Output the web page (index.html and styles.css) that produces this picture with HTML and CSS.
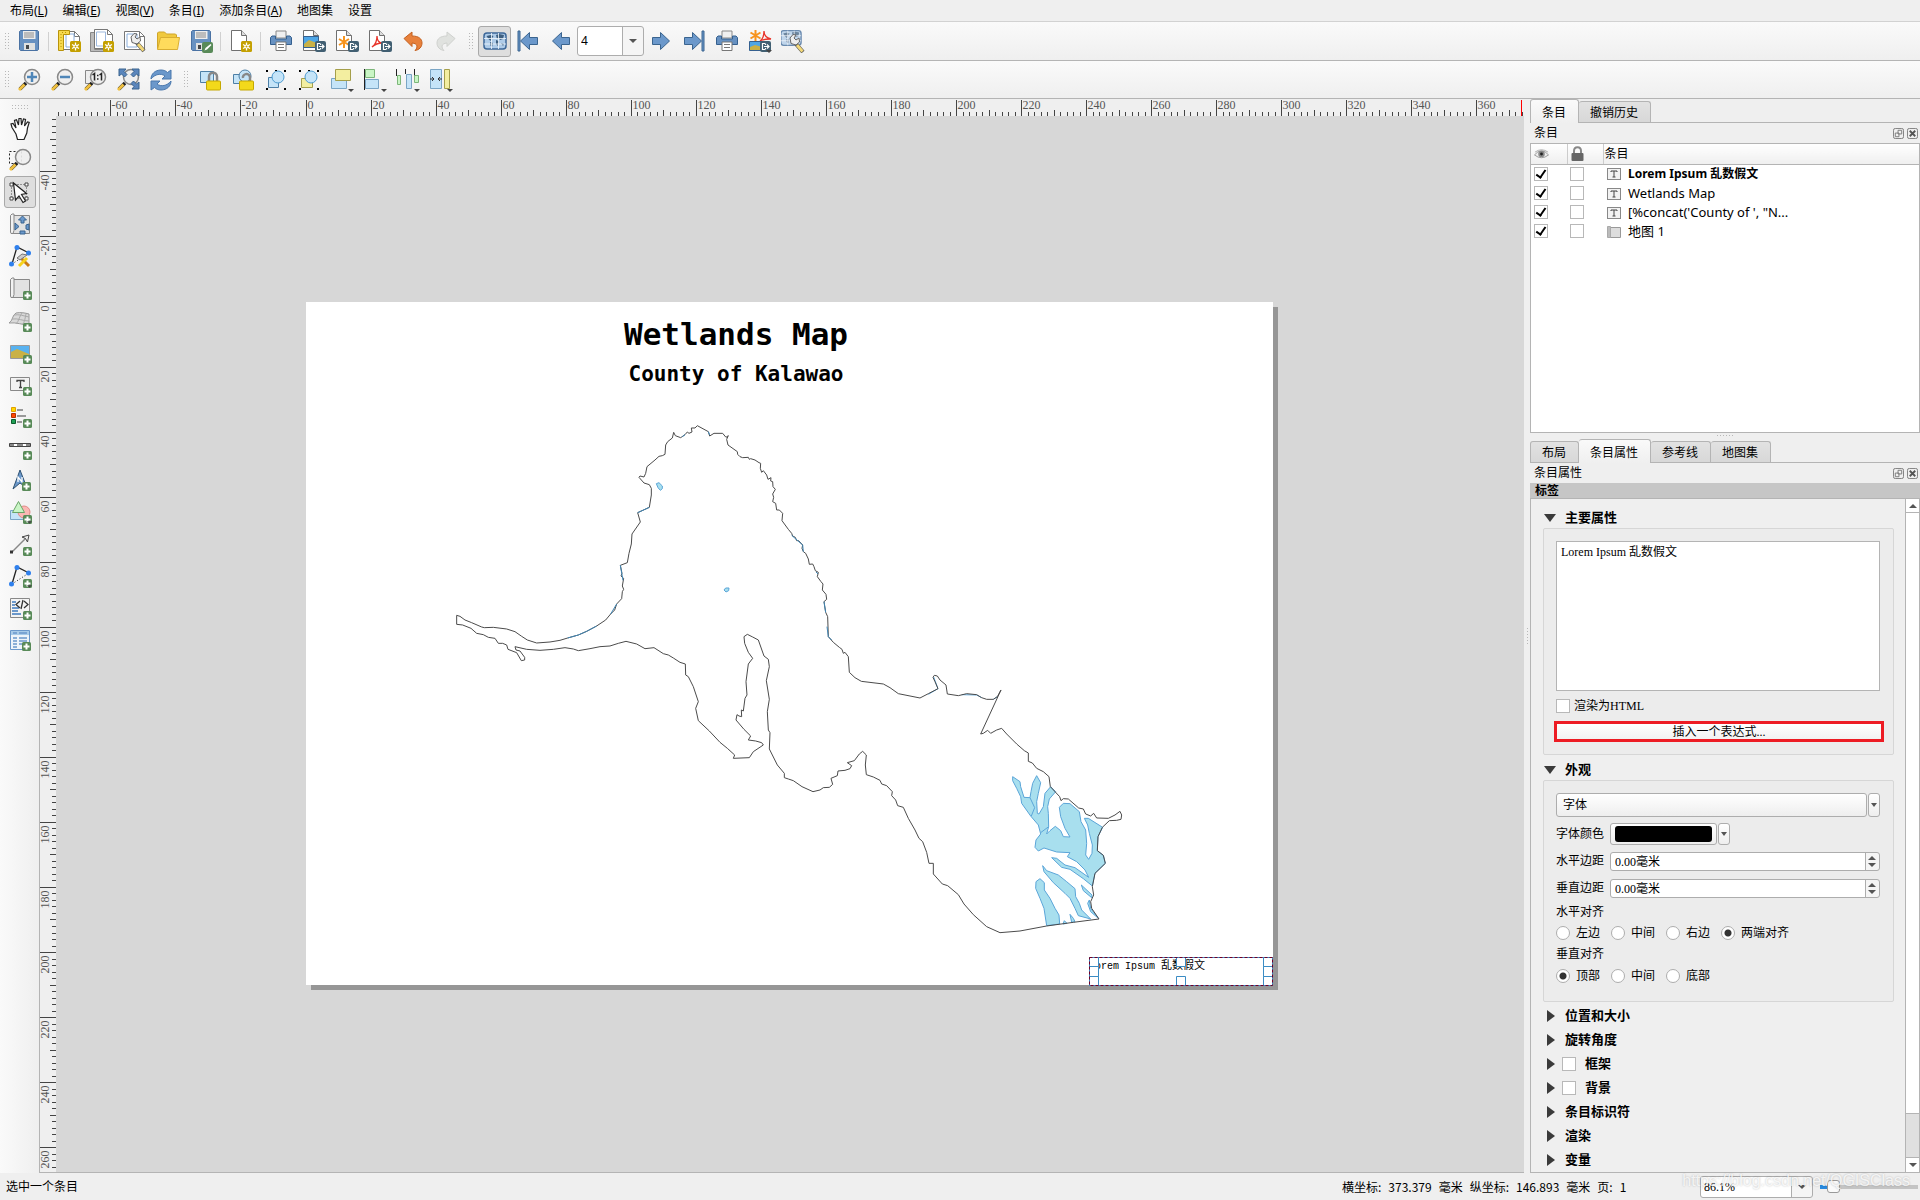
FILE: index.html
```html
<!DOCTYPE html>
<html lang="zh-CN">
<head>
    <meta charset="UTF-8">
    <meta name="viewport" content="width=device-width, initial-scale=1.0">
    <title>布局</title>
    <link rel="stylesheet" href="styles.css">
</head>
<body>
    <!-- shared icon parts -->
    <svg class="defs" width="0" height="0">
        <symbol id="plus" viewBox="0 0 9 9"><rect width="9" height="9" rx="1.5" fill="#588a58"/><path d="M4.5 1.5v6M1.5 4.5h6" stroke="#fff" stroke-width="2"/></symbol>
        <symbol id="star" viewBox="0 0 11 11"><rect width="11" height="11" rx="1.5" fill="#c4a000"/><path d="M5.5 1.5v8M2 3.5l7 4M2 7.5l7-4" stroke="#fff" stroke-width="1.3"/><circle cx="5.5" cy="5.5" r="2" fill="#fff"/><circle cx="5.5" cy="5.5" r="1" fill="#c4a000"/></symbol>
        <symbol id="export" viewBox="0 0 11 11"><rect width="11" height="11" rx="2" fill="#415f72"/><path d="M5 2.5H2.5v6H5M4 5.5h5M7 3.5l2 2-2 2M5.5 2.5v1.5M5.5 7v1.5" fill="none" stroke="#fff" stroke-width="1.2"/></symbol>
        <symbol id="floppy" viewBox="0 0 24 24"><path d="M3.5 1.5h17l1 1v18l-1 1h-17l-1-1v-18z" fill="#6791c1" stroke="#4a72a3"/><path d="M6 2h12.500v8H6z" fill="#eceded"/><path d="M7 4h10M7 6h10M7 8h10" stroke="#8c8c8c"/><path d="M7 14h11v7H7z" fill="#dfe1e1"/><path d="M9 16h3v4H9z" fill="#44474a"/></symbol>
        <symbol id="page" viewBox="0 0 24 24"><path d="M4.500 1.500h10l5 5v15h-15z" fill="#fff" stroke="#707070"/><path d="M14.500 1.500v5h5" fill="#ddd" stroke="#707070"/></symbol>
        <symbol id="printer" viewBox="0 0 24 24"><path d="M7 2h10v7H7z" fill="#f0f0f0" stroke="#888"/><path d="M3 7h3.500v3h11V7H21l1.500 1.500v7h-21v-7z" fill="#6791c1" stroke="#35608f"/><path d="M7 13h10v8.500H7z" fill="#fff" stroke="#777"/><path d="M9 15.500h6M9 18.500h6" stroke="#777"/></symbol>
        <symbol id="glass" viewBox="0 0 24 24"><path d="M3 21l6-6" stroke="#222" stroke-width="3.500"/><path d="M2 22l5.500-5.500" stroke="#f0c040" stroke-width="3"/><circle cx="15" cy="9" r="7.500" fill="#eee" fill-opacity=".9" stroke="#888" stroke-width="1.500"/></symbol>
        <symbol id="arrow" viewBox="0 0 24 24"><path d="M20.500 8.500v7h-8v5L3.500 12l9-8.500v5z" fill="#6b98cb" stroke="#3a648f"/></symbol>
        <symbol id="world" viewBox="0 0 24 24"><rect x="1" y="4" width="22" height="16" rx="3" fill="#aecbe8" stroke="#3c6798" stroke-width="1.500"/><path d="M3.500 7l4-1 3 1-2 3-1 2-2-2zM7 13l3 1-1 4-2-2zM13 6l3-1 5 1-1 4-3 1-1-2-2 1zM13 11l3 1-1 5-2-2zM18 14l3 1-1 2z" fill="#3e5f80"/><path d="M1 9.500h22M1 15h22M8.500 4v16M15.500 4v16" stroke="#f2f7fc" stroke-width=".8"/></symbol>
        <symbol id="wrench" viewBox="0 0 24 24"><path d="M14 14l7 8" stroke="#555" stroke-width="4"/><path d="M15 15l5.500 6.500" stroke="#f3d878" stroke-width="2.800"/><path d="M8 8l3-3.500 3 .5-2 3 2 2 3-2 .5 4-3.500 3-5-1.500z" fill="#eee" stroke="#666"/></symbol>
        <symbol id="mapsheet" viewBox="0 0 24 24"><path d="M5.500 3.500h16v18h-18" fill="#e2e2e2" stroke="#888"/><path d="M2.500 20V3.500l1.500-1.500h2v16.500l-1 3H3z" fill="#f2f2f2" stroke="#888"/></symbol>
        <symbol id="nodes" viewBox="0 0 24 24"><path d="M4 20L9 3l12 6" fill="none" stroke="#222" stroke-width="1.300"/><path d="M4 20L21 9" stroke="#222" stroke-dasharray="1 2"/><g fill="#2f80ed"><circle cx="9" cy="3.500" r="2.500"/><circle cx="20.500" cy="9" r="2.500"/><circle cx="3.500" cy="20" r="2.500"/></g></symbol>
        <symbol id="corners" viewBox="0 0 24 24"><path d="M2 2h2v2H2zM20 2h2v2h-2zM2 20h2v2H2zM20 20h2v2h-2zM11 2h2v1h-2z" fill="#000"/></symbol>
        <symbol id="dd" viewBox="0 0 6 3"><path d="M0 0h6L3 3z" fill="#444"/></symbol>
        <symbol id="float" viewBox="0 0 12 12"><rect x=".5" y=".5" width="11" height="11" rx="2" fill="none" stroke="#777"/><path d="M5.500 2.500h4v4h-4zM2.500 5.500h4v4h-4z" fill="#efefef" stroke="#777"/></symbol>
        <symbol id="close" viewBox="0 0 12 12"><rect x=".5" y=".5" width="11" height="11" rx="2" fill="none" stroke="#777"/><path d="M3 3l6 6M9 3L3 9" stroke="#555" stroke-width="2"/></symbol>
        <symbol id="labelicon" viewBox="0 0 14 12"><rect x=".5" y=".5" width="13" height="11" fill="#f2f2f2" stroke="#888"/><path d="M4 4V3h6v1M7 3v6M5.500 9h3" fill="none" stroke="#444"/></symbol>
    </svg>

    <nav class="menubar">
        <button>布局(<u>L</u>)</button>
        <button>编辑(<u>E</u>)</button>
        <button>视图(<u>V</u>)</button>
        <button>条目(<u>I</u>)</button>
        <button>添加条目(<u>A</u>)</button>
        <button>地图集</button>
        <button>设置</button>
    </nav>

    <div class="toolbar">
        <span class="grip first"></span>
        <button class="tool" title="保存"><svg><use href="#floppy"/></svg></button>
        <span class="sep"></span>
        <button class="tool" title="新建布局"><svg viewBox="0 0 24 24"><path d="M6.500 2.500h11l5 5v13h-16z" fill="#fff" stroke="#777"/><path d="M17.500 2.500v5h5" fill="none" stroke="#777"/><path d="M9 5h8v13H9z" fill="none" stroke="#8aaedb"/><path d="M1.500 1.500h11v4h-6v16h-5z" fill="#f7d94c" stroke="#b8930b"/><path d="M4 5v15M5 3.500h6" stroke="#b8930b" stroke-dasharray="1 2"/><use href="#star" x="13" y="12" width="11" height="11"/></svg></button>
        <button class="tool" title="复制布局"><svg viewBox="0 0 24 24"><path d="M.5 3.500h4v17h15v2H.5z" fill="#bbb" stroke="#888"/><path d="M4.500.5h13l5 5v14h-18z" fill="#fff" stroke="#777"/><path d="M17.500.5v5h5" fill="none" stroke="#777"/><path d="M6.500 3h9v14h-9z" fill="none" stroke="#9db9df"/><use href="#star" x="13" y="12" width="11" height="11"/></svg></button>
        <button class="tool" title="布局管理器"><svg viewBox="0 0 24 24"><path d="M1.500 2.500h15l5 5v13h-20z" fill="#fff" stroke="#777"/><path d="M16.500 2.500v5h5" fill="none" stroke="#777"/><path d="M4 5h10v13H4z" fill="none" stroke="#8aaedb"/><use href="#wrench"/></svg></button>
        <button class="tool" title="打开"><svg viewBox="0 0 24 24"><path d="M1.500 20V4l1-1h6l2 2h9l1 1v3" fill="#f0c93e" stroke="#cfa52b"/><path d="M1.500 20.500l3-12h19l-2 12z" fill="#ffdb5c" stroke="#d9ae32"/></svg></button>
        <button class="tool" title="另存为"><svg viewBox="0 0 24 24"><use href="#floppy"/><rect x="13" y="13" width="11" height="11" rx="2" fill="#588a58"/><path d="M15.500 21.500l1-2.500 5-4 1 1-4.500 4.500z" fill="#fff"/></svg></button>
        <span class="sep"></span>
        <button class="tool" title="添加页面"><svg viewBox="0 0 24 24"><use href="#page" x="-2"/><use href="#star" x="12" y="12" width="11" height="11"/></svg></button>
        <span class="sep"></span>
        <button class="tool" title="打印"><svg><use href="#printer"/></svg></button>
        <button class="tool" title="导出图像"><svg viewBox="0 0 24 24"><use href="#page" x="-3"/><path d="M1.500 7.500h15v11h-15z" fill="#4ea6e6" stroke="#35608f"/><path d="M2 15l5-4 5 2 4 1v4H2z" fill="#c9b146"/><use href="#export" x="13" y="12" width="11" height="11"/></svg></button>
        <button class="tool" title="导出 SVG"><svg viewBox="0 0 24 24"><use href="#page" x="-3"/><path d="M9 7v12M4 10l10 6M4 16l10-6" stroke="#f7941d" stroke-width="2"/><use href="#export" x="13" y="12" width="11" height="11"/></svg></button>
        <button class="tool" title="导出 PDF"><svg viewBox="0 0 24 24"><use href="#page" x="-3"/><path d="M4 18c3-2 5-6 5-11 0 5 3 7 6 7-4 0-8 1-11 4z" fill="none" stroke="#e8352b" stroke-width="1.300"/><use href="#export" x="13" y="12" width="11" height="11"/></svg></button>
        <button class="tool" title="撤销"><svg viewBox="0 0 24 24"><path d="M3 9.500L11 3v4c7 0 10 3 10 7s-3 7-7 7.500c3-3 3-7-3-7.500v3.500z" fill="#e8813c" stroke="#c4601f"/></svg></button>
        <button class="tool" title="重做"><svg viewBox="0 0 24 24"><path d="M21 9.500L13 3v4C6 7 3 10 3 14s3 7 7 7.500c-3-3-3-7 3-7.500v3.500z" fill="#e0e2df" stroke="#cfd1ce"/></svg></button>
        <span class="grip"></span>
        <button class="tool pressed" title="预览地图集"><svg><use href="#world"/></svg></button>
        <button class="tool" title="首个要素"><svg viewBox="0 0 24 24"><path d="M2 2h2v20H2z" fill="#6b98cb" stroke="#3a648f"/><use href="#arrow" x="1"/></svg></button>
        <button class="tool" title="上一要素"><svg><use href="#arrow"/></svg></button>
        <span class="combo page-combo"><select aria-label="页面"><option>4</option></select></span>
        <button class="tool" title="下一要素"><svg class="flip"><use href="#arrow"/></svg></button>
        <button class="tool" title="末个要素"><svg class="flip" viewBox="0 0 24 24"><path d="M2 2h2v20H2z" fill="#6b98cb" stroke="#3a648f"/><use href="#arrow" x="1"/></svg></button>
        <button class="tool" title="打印地图集"><svg><use href="#printer"/></svg></button>
        <button class="tool" title="导出地图集"><svg viewBox="0 0 24 24"><path d="M7.500 1v11M2.500 3.500l10 6M2.500 9.500l10-6" stroke="#f7941d" stroke-width="2"/><path d="M12 12c3-2 4-5 4-10 0 5 3 7 7 8-5 0-8 0-11 2z" fill="none" stroke="#e8352b" stroke-width="1.300"/><path d="M1.500 12.500h13v9h-13z" fill="#4ea6e6" stroke="#35608f"/><path d="M2 18l5-2 7 2v3H2z" fill="#c9b146"/><use href="#export" x="12" y="12" width="11" height="11"/><use href="#dd" x="18" y="21" width="6" height="3"/></svg></button>
        <button class="tool" title="地图集设置"><svg viewBox="0 0 24 24"><use href="#world" x="-1" y="-2" width="22" height="22" opacity=".75"/><use href="#wrench" x="1" y="1"/></svg></button>
    </div>

    <div class="toolbar second">
        <span class="grip first"></span>
        <button class="tool" title="放大"><svg viewBox="0 0 24 24"><use href="#glass"/><path d="M15 4v10M10 9h10" stroke="#4f86b8" stroke-width="2.500"/></svg></button>
        <button class="tool" title="缩小"><svg viewBox="0 0 24 24"><use href="#glass"/><path d="M10 9h10" stroke="#4f86b8" stroke-width="2.500"/></svg></button>
        <button class="tool" title="缩放至 100%"><svg viewBox="0 0 24 24"><path d="M2.500 2.500h10v13h-10z" fill="#eee" stroke="#888"/><use href="#glass"/><path d="M9.500 7l2-1.500v7M16.500 7l2-1.500v7" fill="none" stroke="#222" stroke-width="1.500"/><path d="M14 7.500h1.500M14 11h1.500" stroke="#222" stroke-width="1.500"/></svg></button>
        <button class="tool" title="全图缩放"><svg viewBox="0 0 24 24"><use href="#glass"/><path d="M3 1h7L8 3.500l3 3L8.500 9l-3-3L3 8zM23 1h-7l2 2.500-3 3L17.500 9l3-3L23 8zM23 21h-7l2-2.500-3-3 2.500-2.500 3 3 2.500-2z" fill="#5b86bc" stroke="#3a648f"/></svg></button>
        <button class="tool" title="刷新"><svg viewBox="0 0 24 24"><path d="M2 11c0-5 4-9 10-9 3 0 5 1 6.500 2.500L22 2v9h-9l3-3c-4-3-10-2-14 3z" fill="#6b98cb" stroke="#4a78ad"/><path d="M22 13c0 5-4 9-10 9-3 0-5-1-6.500-2.500L2 22v-9h9l-3 3c4 3 10 2 14-3z" fill="#6b98cb" stroke="#4a78ad"/></svg></button>
        <span class="grip"></span>
        <button class="tool" title="锁定所选条目"><svg viewBox="0 0 24 24"><path d="M2.500 3.500h13v11h-13z" fill="#c5e4f8" stroke="#4d7fa6"/><path d="M11 14V8.500c0-5 8-5 8 0V14" fill="none" stroke="#888" stroke-width="2.500"/><rect x="8.500" y="13" width="14" height="9" rx="1" fill="#f3d91b" stroke="#c5a800"/></svg></button>
        <button class="tool" title="解锁全部"><svg viewBox="0 0 24 24"><path d="M2.500 6.500h10v9h-10z" fill="#c5e4f8" stroke="#4d7fa6"/><circle cx="14" cy="8" r="6" fill="#c5e4f8" stroke="#4d7fa6"/><path d="M19 13V9c-1-5-8-3-7 1" fill="none" stroke="#888" stroke-width="2.500"/><rect x="8.500" y="13" width="14" height="9" rx="1" fill="#f3d91b" stroke="#c5a800"/></svg></button>
        <button class="tool" title="组合"><svg viewBox="0 0 24 24"><path d="M4.500 9.500h10v10h-10z" fill="#c5e4f8" stroke="#4d7fa6"/><circle cx="14" cy="9" r="6" fill="#c5e4f8" stroke="#4d9bd0"/><use href="#corners"/></svg></button>
        <button class="tool" title="取消组合"><svg viewBox="0 0 24 24"><path d="M4.500 10.500h11v9h-11z" fill="#f3eea0" stroke="#a59f4a"/><circle cx="14" cy="9" r="6" fill="#c5e4f8" stroke="#4d9bd0"/><use href="#corners"/></svg></button>
        <button class="tool" title="提升"><svg viewBox="0 0 24 24"><path d="M1.500 10.500h15v10h-15z" fill="#c5e4f8" stroke="#7aa5c5"/><path d="M5.500 1.500h15v11h-15z" fill="#f3eea0" stroke="#a59f4a"/><use href="#dd" x="18" y="21" width="6" height="3"/></svg></button>
        <button class="tool" title="对齐"><svg viewBox="0 0 24 24"><path d="M1.500 1v21" stroke="#222"/><path d="M2.500 1.500h9v8h-9z" fill="#c9f5c5" stroke="#7db67a"/><path d="M2.500 11.500h13v9h-13z" fill="#c5e4f8" stroke="#7aa5c5"/><use href="#dd" x="18" y="21" width="6" height="3"/></svg></button>
        <button class="tool" title="分布"><svg viewBox="0 0 24 24"><path d="M.5 1v7M9.500 1v5M18.500 1v7" stroke="#222"/><path d="M1.500 7.500h3v9h-3zM18.500 7.500h4v7h-4z" fill="#c9f5c5" stroke="#7db67a"/><path d="M10.500 6.500h5v14h-5z" fill="#c5e4f8" stroke="#7aa5c5"/><use href="#dd" x="18" y="21" width="6" height="3"/></svg></button>
        <button class="tool" title="调整大小"><svg viewBox="0 0 24 24"><path d="M1.500 1.500h11v19h-11z" fill="#c5e4f8" stroke="#7aa5c5"/><path d="M1 11h4M3 9l2 2-2 2M13 11H9M11 9l-2 2 2 2" fill="none" stroke="#333"/><path d="M15.500 1.500h5v19h-5z" fill="#f3eea0" stroke="#a59f4a"/><use href="#dd" x="18" y="21" width="6" height="3"/></svg></button>
    </div>

    <main class="work">
        <div class="toolbox">
            <span class="grip-h"></span>
            <button class="tool" title="平移"><svg viewBox="0 0 24 24"><path d="M8 18L4 11.500 3 8l2-.5L8 12 6.500 4.500l2-.7L10.500 9 11 2.500h2L13.500 9l2-6 2 .5L16.500 10l3-4 1.700.5-1.700 5.500-.7 5L16 23.500H9.500z" fill="#fff" stroke="#222" stroke-width="1.200"/></svg></button>
            <button class="tool" title="缩放"><svg viewBox="0 0 24 24"><path d="M1.500 3.500h12v12h-12z" fill="none" stroke="#222" stroke-dasharray="2 2"/><use href="#glass"/></svg></button>
            <button class="tool pressed" title="选择/移动条目"><svg viewBox="0 0 24 24"><path d="M3.500 4.500h15v14h-15z" fill="none" stroke="#444" stroke-dasharray="1 2"/><path d="M2 3h3v3H2zM17 3h3v3h-3zM2 17h3v3H2zM17 17h3v3h-3z" fill="#fff" stroke="#444"/><path d="M5.500 3l2 17 3.500-4 4 6.500 2.500-1.500-4-6.500 5-1z" fill="#fff" stroke="#222" stroke-width="1.200"/></svg></button>
            <button class="tool" title="移动条目内容"><svg viewBox="0 0 24 24"><use href="#mapsheet"/><path d="M14.500 4l4 4H16v3h-3V8h-2.500zM7 11l4 3.500L7 18zM21 12l-3 1v4l3 1zM12 19h5v3h-5z" fill="#6b98cb" stroke="#3a648f"/></svg></button>
            <button class="tool" title="编辑节点"><svg viewBox="0 0 24 24"><use href="#nodes"/><path d="M13 14l8 8" stroke="#c97a12" stroke-width="3"/><path d="M11 22l8-8" stroke="#f7d21b" stroke-width="3"/><path d="M9 14l5-4 5 1-7 5z" fill="#ccc" stroke="#777"/></svg></button>
            <button class="tool" title="添加地图"><svg viewBox="0 0 24 24"><use href="#mapsheet"/><use href="#plus" x="15" y="15" width="9" height="9"/></svg></button>
            <button class="tool" title="添加 3D 地图"><svg viewBox="0 0 24 24"><path d="M1 15c4-2 3-8 7-10 5-1 9 0 13 1v11c-6 0-13-3-20-2z" fill="#d9d9d9" stroke="#999"/><path d="M4 11c6-1 11 2 17 2M6 7c5-1 10 1 15 2M8 16c3-3 3-7 6-11M14 17c3-3 3-7 4-11" fill="none" stroke="#aaa"/><use href="#plus" x="15" y="15" width="9" height="9"/></svg></button>
            <button class="tool" title="添加图片"><svg viewBox="0 0 24 24"><path d="M2.500 5.500h19v13h-19z" fill="#58b2f0" stroke="#999"/><path d="M3 12l6-3 12 5v4H3z" fill="#c9b146"/><use href="#plus" x="15" y="15" width="9" height="9"/></svg></button>
            <button class="tool" title="添加标签"><svg viewBox="0 0 24 24"><path d="M2.500 5.500h19v13h-19z" fill="#f3f3f3" stroke="#888"/><path d="M9 10V8.500h7V10M12.500 8.500v7M11 15.500h3" fill="none" stroke="#444" stroke-width="1.300"/><use href="#plus" x="15" y="15" width="9" height="9"/></svg></button>
            <button class="tool" title="添加图例"><svg viewBox="0 0 24 24"><path d="M3.500 3.500h4v4h-4z" fill="#ffd800" stroke="#e0a000"/><path d="M3.500 9.500h4v4h-4z" fill="#ff4a00" stroke="#b33000"/><path d="M3.500 15.500h4v4h-4z" fill="#1fa055" stroke="#0c5c2c"/><path d="M9 6h6M9 12h9M9 18h5" stroke="#999" stroke-width="2"/><use href="#plus" x="15" y="15" width="9" height="9"/></svg></button>
            <button class="tool" title="添加比例尺"><svg viewBox="0 0 24 24"><path d="M1.500 7.500h21v3h-21z" fill="#888" stroke="#444"/><path d="M6 9h3M15 9h3" stroke="#fff" stroke-width="2"/><use href="#plus" x="15" y="15" width="9" height="9"/></svg></button>
            <button class="tool" title="添加指北针"><svg viewBox="0 0 24 24"><path d="M12 2l7 18-7-5-7 6z" fill="#6b98cb" stroke="#2f5273"/><path d="M10 14V9l4 5V9" fill="none" stroke="#fff" stroke-width="1.300"/><use href="#plus" x="14" y="14" width="9" height="9"/></svg></button>
            <button class="tool" title="添加形状"><svg viewBox="0 0 24 24"><path d="M2.500 10.500h14v9h-14z" fill="#c5e4f8" stroke="#7aa5c5"/><circle cx="16" cy="12" r="6" fill="#fbb7b4" stroke="#e08a86"/><path d="M10.500 1.500l6 11h-12z" fill="#c9f5c5" stroke="#6aa567"/><use href="#plus" x="15" y="15" width="9" height="9"/><use href="#dd" x="19" y="21" width="5" height="3"/></svg></button>
            <button class="tool" title="添加箭头"><svg viewBox="0 0 24 24"><path d="M4 20L18 6" stroke="#888" stroke-width="1.500"/><path d="M21 3l-1.500 7-2-3.500L14 5z" fill="#eee" stroke="#444"/><path d="M2 18.500h3v3H2z" fill="#333"/><use href="#plus" x="15" y="15" width="9" height="9"/></svg></button>
            <button class="tool" title="添加节点条目"><svg viewBox="0 0 24 24"><use href="#nodes"/><use href="#plus" x="15" y="15" width="9" height="9"/><use href="#dd" x="19" y="21" width="5" height="3"/></svg></button>
            <button class="tool" title="添加 HTML"><svg viewBox="0 0 24 24"><path d="M2.500 2.500h19v19h-19z" fill="#f4f4f4" stroke="#888"/><path d="M4 6h4M4 9h3M4 12h7M4 15h6M4 18h9" stroke="#6b98cb" stroke-width="2"/><path d="M12 5L8 8.500l4 3.500M16 5l4 3.500-4 3.500M15 4l-2 9" fill="none" stroke="#333" stroke-width="1.300"/><use href="#plus" x="15" y="15" width="9" height="9"/></svg></button>
            <button class="tool" title="添加属性表"><svg viewBox="0 0 24 24"><path d="M2.500 2.500h19v19h-19z" fill="#eef4fa" stroke="#6b98cb"/><path d="M3 3h18v4H3z" fill="#a8cbe9"/><path d="M5 5h4M11 5h8M5 10h4M11 10h8M5 13h4M11 13h8M5 16h4M11 16h4M5 19h4" stroke="#6b98cb" stroke-width="1.300"/><use href="#plus" x="14" y="14" width="9" height="9"/></svg></button>
        </div>

        <div class="view">
            <div class="corner"></div>
            <svg class="ruler" id="rulerX"></svg>
            <svg class="ruler" id="rulerY"></svg>
            <div class="canvas">
                <div class="paper">
                    <svg class="map" viewBox="306 302 967 683">
                        <g transform="translate(440 410) scale(.33333)" fill="none" stroke="#4a4a4a" stroke-width="3" stroke-linejoin="round">
                            <path fill="#a8dfee" stroke="#5aa5d8" d="M649 221l8-3 10 10v8l-6 5-7-8zM852 540l5-6h10l-1 8-8 4z"/>
                            <path d="M50 643V616L60 619 75 630 95 638 125 651 133 653 160 652 200 657 225 665 245 679 262 690 290 699 330 696 360 691 383 684 415 675 440 664 470 648 497 630 512 612 524 600 530 582 545 566 547 545 551 538 547 528 551 505 543 498 546 490 541 466 562 458 567 430 574 402 576 372 601 336 593 308 628 292 634 255 634 235 628 224 612 219 597 202 600 198 612 201 617 190 621 170 645 150 657 139 667 137 675 133 677 105 683 95 697 84 701 67 706 77 722 83 735 74 742 66 747 70 756 66 754 54 765 54 772 47 805 65 809 78 822 70 848 70 858 82 865 77 860 88 864 105 892 125 893 133 900 140 908 143 925 142 928 148 932 146 945 150 957 158 962 160 961 175 965 187 970 182 980 195 984 208 993 203 992 213 998 215 999 230 1006 238 998 252 1001 262 998 275 1007 280 1010 300 1018 300 1028 310 1026 332 1045 358 1055 370 1058 378 1066 382 1070 392 1076 392 1088 405 1086 415 1090 425 1097 430 1105 447 1108 463 1118 462 1122 470 1126 482 1135 487 1132 500 1143 515 1149 522 1147 540 1158 553 1160 568 1152 575 1157 607 1163 620 1165 680 1180 697 1198 712 1206 718 1210 730 1215 727 1225 740"/>
                            <path d="M1140 1140L1119 1145 1086 1130 1060 1112 1045 1107 1033 1103 1033 1090 1012 1065 988 1017 990 968 985 960 982 905 988 868 979 812 988 770 985 748 972 738 955 690 938 681 922 673 912 680 914 700 925 727 938 745 925 762 918 815 921 855 915 865 910 903 904 900 905 920 897 918 891 914 888 930 912 958 932 978 925 990 947 993 965 998 970 1005 940 1025 928 1043 880 1045 884 1035 862 1015 840 997 808 963 775 932 767 895 775 875 760 830 745 800 737 795 736 762 720 757 700 744 685 735 670 731 642 713 615 716 590 702 558 694 535 700 510 708 480 710 450 716 415 722 400 717 375 713 340 718 300 721 260 718 225 710 228 720 240 723 254 742 254 750 244 752 230 728 204 718 200 705 188 700 175 700 165 685 145 682 130 674 110 670 93 655 68 645 50 643"/>
                            <path stroke="#3f86b5" d="M383 684L415 675 440 664 470 648M593 308l35-16M541 466l8 45M530 582l-18 30M805 65l4 10M735 74l-8 6M1055 376l33 29 2 20M1128 486l6 6M1152 575l5 32M1161 650l4 30 10 10"/>
                        </g>
                        <g transform="translate(820 600) scale(.33333)" fill="none" stroke-width="3" stroke-linejoin="round">
                            <g fill="#a8dfee" stroke="#5aa5d8">
                                <path d="M578 530L600 545 602 560 612 592 630 593 633 575 638 550 650 527 662 548 655 580 650 605 652 640 657 642 670 620 675 580 692 560 707 575 688 597 683 620 685 640 686 680 680 702 690 692 706 679 722 692 730 710 750 711 735 685 722 650 718 622 730 610 750 611 778 635 783 665 797 690 800 730 797 765 806 778 816 760 817 735 808 700 803 675 793 655 805 655 848 682 834 710 832 752 850 766 856 790 825 820 817 858 790 836 750 808 725 802 695 773 710 775 735 795 765 803 806 832 795 810 770 785 742 770 750 758 710 756 672 744 655 753 645 742 648 720 662 702 655 675 632 648 605 610 602 590 590 565 578 542Z"/>
                                <path d="M668 797L680 812 715 825 740 845 765 866 767 890 778 910 785 930 812 957 775 947 765 925 750 895 735 880 700 848 672 815ZM660 836L673 848 673 870 690 895 705 925 717 945 719 972 680 977 672 925 660 895 647 865 648 845ZM784 855L816 885 815 893 790 872ZM808 900L812 925 835 955 812 935 803 910ZM750 943L760 955 765 965 755 967ZM733 962l8 8-12 2Z"/>
                                <path fill="none" d="M630 593l14 30-10 25M662 698l24-18M325 283l29-17-13-35M425 284l45 1 15 8M520 298l12-8"/>
                            </g>
                            <path stroke="#4a4a4a" d="M85 170L88 217 105 233 124 244 190 252 210 263 235 281 270 288 300 294 325 281 354 266 345 245 339 232 343 226 352 228 360 240 378 255 382 282 415 287 440 281 470 284 485 293 500 298 520 298 532 290 543 270 482 402 490 400 503 391 512 400 530 390 545 385 560 402 590 432 613 452 625 459 625 484 637 489 650 505 670 515 687 530 691 560 719 590 723 602 730 596 745 597 776 624 790 627 797 642 812 648 821 640 830 654 865 655 885 645 900 634 905 645 903 658 890 661 868 662 847 682 834 710 832 752 850 766 856 790 825 820 817 860 821 885 812 905 815 925 837 957 760 967 680 978 600 993 540 998 500 980 460 944 432 912 415 884 383 857 367 852 340 822 340 790 327 790 320 757 308 725 297 715 285 690 265 655 250 622 233 617 227 600 215 587 217 575 200 557 185 552 180 541 160 531 139 524 136 495 139 465 128 454 118 462 103 482 82 488 95 497 90 506 75 511 54 513 52 527 33 535 38 553 28 562 10 563 0 570"/>
                        </g>
                    </svg>
                    <p class="map-title">Wetlands Map</p>
                    <p class="map-subtitle">County of Kalawao</p>
                    <div class="label-item">
                        <span class="latin">Lorem Ipsum </span>乱数假文
                        <svg class="handles" viewBox="0 0 184 29">
                            <path d="M.5.5h9v9h-9zM.5 9.500h9v10h-9zM.5 19.500h9v9h-9zM87.500.5h9v9h-9zM87.500 19.500h9v9h-9zM174.500.5h9v9h-9zM174.500 9.500h9v10h-9zM174.500 19.500h9v9h-9z" fill="#fff" stroke="#3b8cc4"/>
                            <path d="M.5.5h183v28H.5z" fill="none" stroke="#3b8cc4"/>
                            <path d="M.5.5h183v28H.5z" fill="none" stroke="#700028" stroke-dasharray="3 2"/>
                        </svg>
                    </div>
                </div>
            </div>
        </div>

        <div class="splitter"></div>

        <aside class="dock">
            <div class="tabs">
                <button class="tab active">条目</button>
                <button class="tab">撤销历史</button>
            </div>
            <div class="dock-title"><span>条目</span><button title="浮动"><svg><use href="#float"/></svg></button><button title="关闭"><svg><use href="#close"/></svg></button></div>
            <div class="tree">
                <table>
                    <thead>
                        <tr>
                            <th class="narrow"><svg class="eye" viewBox="0 0 16 12"><path d="M.5 7Q8-2 15.500 7 8 13 .5 7z" fill="#eee" stroke="#999"/><circle cx="8" cy="6" r="3.500" fill="#888"/><circle cx="8" cy="6" r="1.500" fill="#222"/><path d="M1 4q7-5 14 0" fill="none" stroke="#aaa"/></svg></th>
                            <th class="narrow"><svg class="lock" viewBox="0 0 13 15"><path d="M3 8V5c0-5 7-5 7 0v3" fill="none" stroke="#888" stroke-width="2"/><rect x=".5" y="7" width="12" height="8" rx="1" fill="#666"/></svg></th>
                            <th>条目</th>
                        </tr>
                    </thead>
                    <tbody>
                        <tr class="current"><td><input type="checkbox" aria-label="可见" checked></td><td><input type="checkbox" aria-label="锁定"></td><td><svg class="kind"><use href="#labelicon"/></svg>Lorem Ipsum 乱数假文</td></tr>
                        <tr><td><input type="checkbox" aria-label="可见" checked></td><td><input type="checkbox" aria-label="锁定"></td><td><svg class="kind"><use href="#labelicon"/></svg>Wetlands Map</td></tr>
                        <tr><td><input type="checkbox" aria-label="可见" checked></td><td><input type="checkbox" aria-label="锁定"></td><td><svg class="kind"><use href="#labelicon"/></svg>[%concat('County of ', "N...</td></tr>
                        <tr><td><input type="checkbox" aria-label="可见" checked></td><td><input type="checkbox" aria-label="锁定"></td><td><svg class="kind" viewBox="0 0 14 12"><path d="M1.500 1.500h12v10h-12z" fill="#ddd" stroke="#999"/><path d="M.5.5h3v11h-3z" fill="#bbb" stroke="#aaa"/></svg>地图 1</td></tr>
                    </tbody>
                </table>
            </div>
            <div class="dots"></div>
            <div class="tabs">
                <button class="tab">布局</button>
                <button class="tab active">条目属性</button>
                <button class="tab">参考线</button>
                <button class="tab">地图集</button>
            </div>
            <div class="dock-title"><span>条目属性</span><button title="浮动"><svg><use href="#float"/></svg></button><button title="关闭"><svg><use href="#close"/></svg></button></div>
            <div class="kind-bar">标签</div>
            <div class="props">
                <div class="props-body">
                    <div class="head"><button class="open">主要属性</button></div>
                    <section class="group main-props">
                        <textarea aria-label="标签文本">Lorem Ipsum 乱数假文</textarea>
                        <label class="check"><input type="checkbox">渲染为HTML</label>
                        <button class="insert">插入一个表达式...</button>
                    </section>
                    <div class="head"><button class="open">外观</button></div>
                    <section class="group look">
                        <div class="split font"><button class="face">字体</button><button class="drop" aria-label="字体选项"></button></div>
                        <div class="row color"><label for="fc">字体颜色</label><div class="split"><button id="fc" class="swatch"><i></i></button><button class="drop" aria-label="颜色选项"></button></div></div>
                        <div class="row"><label for="mh">水平边距</label><span class="spin"><input id="mh" type="text" value="0.00毫米"></span></div>
                        <div class="row"><label for="mv">垂直边距</label><span class="spin"><input id="mv" type="text" value="0.00毫米"></span></div>
                        <div class="caption">水平对齐</div>
                        <div class="radios">
                            <label><input type="radio" name="h">左边</label>
                            <label><input type="radio" name="h">中间</label>
                            <label><input type="radio" name="h">右边</label>
                            <label><input type="radio" name="h" checked>两端对齐</label>
                        </div>
                        <div class="caption">垂直对齐</div>
                        <div class="radios">
                            <label><input type="radio" name="v" checked>顶部</label>
                            <label><input type="radio" name="v">中间</label>
                            <label><input type="radio" name="v">底部</label>
                        </div>
                    </section>
                    <div class="folded">
                        <div class="head"><button>位置和大小</button></div>
                        <div class="head"><button>旋转角度</button></div>
                        <div class="head"><button aria-label="展开框架"></button><label><input type="checkbox">框架</label></div>
                        <div class="head"><button aria-label="展开背景"></button><label><input type="checkbox">背景</label></div>
                        <div class="head"><button>条目标识符</button></div>
                        <div class="head"><button>渲染</button></div>
                        <div class="head"><button>变量</button></div>
                    </div>
                </div>
                <div class="scroll">
                    <button class="up" aria-label="向上"></button>
                    <div class="track"><div class="thumb"></div></div>
                    <button class="down" aria-label="向下"></button>
                </div>
            </div>
        </aside>
    </main>

    <footer class="status">
        <span class="hint">选中一个条目</span>
        <span class="coords"><span>横坐标:</span><span>373.379</span><span>毫米</span><span>纵坐标:</span><span>146.893</span><span>毫米</span><span>页:</span><span>1</span></span>
        <span class="combo zoom-combo"><select aria-label="缩放"><option>86.1%</option></select></span>
        <input class="zoom" type="range" aria-label="缩放比例" min="0" max="100" value="8">
        <span class="watermark">https://blog.csdn.net/QGISClass</span>
    </footer>

    <script>
        // rulers: 3.2526 px per mm, a tick every 2 mm and a number every 20 mm
        var SCALE = 3.2526;
        function drawRuler(id, zero, vertical)
        {
            var svg = document.getElementById(id);
            var length = vertical ? svg.clientHeight : svg.clientWidth;
            var depth = vertical ? 16 : 17;
            var ticks = "";
            var labels = "";
            var first = Math.ceil((2 - zero) / SCALE / 2) * 2;
            for(var mm = first; zero + mm * SCALE < length; mm += 2)
            {
                var p = Math.floor(zero + mm * SCALE) + 0.5;
                var size = mm % 20 == 0 ? 16 : (mm % 10 == 0 ? 6 : 4);
                if(vertical)
                {
                    ticks += "M" + (depth - size) + " " + p + "h" + size;
                }
                else
                {
                    ticks += "M" + p + " " + (depth - size) + "v" + size;
                }
                if(mm % 20 == 0)
                {
                    if(vertical)
                    {
                        labels += '<text text-anchor="end" transform="translate(9 ' + (p + 3) + ') rotate(-90)">' + mm + '</text>';
                    }
                    else
                    {
                        labels += '<text x="' + (p + 1) + '" y="10">' + mm + '</text>';
                    }
                }
            }
            svg.innerHTML = '<path d="' + ticks + '"/>' + labels;
            if(!vertical)
            {
                svg.innerHTML += '<path class="cursor" d="M' + (length - 2.5) + ' 1v16"/>';
            }
        }
        function drawRulers()
        {
            drawRuler("rulerX", 250, false);
            drawRuler("rulerY", 186, true);
        }
        drawRulers();
        window.addEventListener("resize", drawRulers);
    </script>
</body>
</html>
```
FILE: styles.css
```css
*, *::before, *::after {
    box-sizing: border-box;
    margin: 0;
    padding: 0;
}
body {
    display: flex;
    flex-direction: column;
    height: 100vh;
    overflow: hidden;
    background: #efefef;
    color: #000;
    font: 12px/16px "Noto Sans", "Noto Sans CJK SC", sans-serif;
}
button, input, select, textarea {
    font: inherit;
    color: inherit;
}
button {
    background: none;
    border: none;
}
.defs {
    position: absolute;
}

/* menu and toolbars */
.menubar {
    display: flex;
    gap: 15px;
    height: 22px;
    flex: none;
    padding-left: 10px;
    align-items: center;
    border-bottom: 1px solid #d2d2d2;
}
.toolbar {
    display: flex;
    flex: none;
    align-items: center;
    height: 39px;
    background: linear-gradient(#fafafa, #efefef);
    border-bottom: 1px solid #b4b4b4;
}
.toolbar.second {
    height: 38px;
}
.tool {
    display: flex;
    flex: none;
    align-items: center;
    justify-content: center;
    width: 33px;
    height: 31px;
    border: 1px solid transparent;
    border-radius: 3px;
}
.tool svg {
    width: 24px;
    height: 24px;
}
.tool .flip {
    transform: scaleX(-1);
}
.tool.pressed {
    background: #dedede;
    border-color: #a9a9a9;
}
.sep {
    width: 7px;
    height: 19px;
    background: linear-gradient(#d0d0d0, #d0d0d0) center / 1px 100% no-repeat;
}
/* dotted handles: one dot in each 3px tile */
.grip, .grip-h, .dots::before, .splitter::before {
    background: conic-gradient(at 1px 1px, transparent 270deg, #b8b8b8 0) 0 0 / 3px 3px content-box content-box;
}
.grip {
    width: 16px;
    height: 17px;
    padding: 0 4px 0 7px;
}
.grip.first {
    width: 12px;
    padding: 0 3px 0 5px;
}
.combo {
    position: relative;
    display: flex;
}
.combo select {
    appearance: none;
    width: 100%;
    padding-left: 3px;
    border: 1px solid #adadad;
    border-radius: 3px;
    background: linear-gradient(90deg, #fff calc(100% - 21px), #adadad 0, #adadad calc(100% - 20px), #f5f5f5 0);
}
.combo::after {
    content: "";
    position: absolute;
    right: 7px;
    top: 50%;
    margin-top: -2px;
    border: 4px solid transparent;
    border-top-color: #555;
    border-bottom: none;
}
.page-combo {
    width: 67px;
    height: 30px;
}

/* work area */
.work {
    display: grid;
    grid-template-columns: 40px minmax(0, 1fr) 6px 390px;
    flex: 1;
    min-height: 0;
}
.toolbox {
    display: flex;
    flex-direction: column;
    align-items: center;
    background: linear-gradient(90deg, #fafafa, #efefef);
    border-right: 1px solid #b4b4b4;
}
.toolbox .tool {
    width: 32px;
    height: 32px;
}
.grip-h {
    width: 16px;
    height: 13px;
    padding: 6px 0 3px;
}
.view {
    display: grid;
    grid-template-columns: 16px minmax(0, 1fr);
    grid-template-rows: 17px minmax(0, 1fr);
    border-bottom: 1px solid #b4b4b4;
}
.ruler {
    width: 100%;
    height: 100%;
    overflow: visible;
    font: 12px "Liberation Serif", serif;
    fill: #555;
}
.ruler path {
    stroke: #444;
}
.ruler .cursor {
    stroke: #f00;
}
.canvas {
    position: relative;
    overflow: hidden;
    background: #d7d7d7;
}
.paper {
    position: absolute;
    left: 250px;
    top: 186px;
    width: 967px;
    height: 683px;
    background: #fff;
    box-shadow: 5px 5px 0 #969696;
}
.map {
    display: block;
    width: 100%;
    height: 100%;
}
.map-title, .map-subtitle {
    position: absolute;
    left: 230px;
    width: 400px;
    text-align: center;
    font-family: "DejaVu Sans Mono", monospace;
    font-weight: bold;
    white-space: nowrap;
}
.map-title {
    top: 12px;
    font-size: 31px;
    line-height: 40px;
}
.map-subtitle {
    top: 58px;
    font-size: 21px;
    line-height: 28px;
}
.label-item {
    position: absolute;
    left: 783px;
    top: 655px;
    width: 184px;
    height: 29px;
    font: 11px/14px "Noto Sans CJK SC", sans-serif;
    white-space: nowrap;
}
.label-item .latin {
    font: 10px/14px "Liberation Mono", monospace;
    white-space: pre;
}
.handles {
    position: absolute;
    left: 0;
    top: 0;
    width: 184px;
    height: 29px;
}
.splitter {
    display: flex;
    align-items: center;
    justify-content: center;
}
.splitter::before {
    content: "";
    width: 1px;
    height: 16px;
}

/* right dock */
.dock {
    display: flex;
    flex-direction: column;
    min-height: 0;
}
.tabs {
    display: flex;
    flex: none;
    align-items: flex-end;
    height: 24px;
    border-bottom: 1px solid #b4b4b4;
}
.tab {
    height: 21px;
    padding: 2px 12px 0 11px;
    border: 1px solid #b4b4b4;
    border-left-width: 0;
    border-bottom: none;
    border-radius: 3px 3px 0 0;
    background: linear-gradient(#e2e2e2, #d8d8d8);
}
.tab:first-child {
    border-left-width: 1px;
}
.tab.active {
    height: 24px;
    margin-bottom: -1px;
    background: linear-gradient(#fafafa, #efefef);
}
.dock-title {
    display: flex;
    flex: none;
    align-items: center;
    gap: 3px;
    height: 20px;
    padding: 0 2px 0 4px;
}
.dock-title span {
    flex: 1;
}
.dock-title button, .dock-title svg {
    display: block;
    width: 11px;
    height: 11px;
}
.tree {
    flex: none;
    height: 290px;
    border: 1px solid #b4b4b4;
    background: #fff;
    font-size: 13px;
}
.tree table {
    width: 100%;
    border-collapse: collapse;
    table-layout: fixed;
}
.tree th {
    height: 20px;
    padding-left: 1px;
    border-bottom: 1px solid #b4b4b4;
    background: linear-gradient(#fff, #efefef);
    font-size: 12px;
    font-weight: normal;
    text-align: left;
}
.tree .narrow {
    width: 36px;
    padding-left: 3px;
    border-right: 1px solid #ccc;
}
.tree th svg {
    display: block;
}
.eye {
    width: 15px;
    height: 12px;
}
.lock {
    width: 13px;
    height: 15px;
}
.tree td {
    height: 19px;
    padding-left: 3px;
    line-height: 14px;
    white-space: nowrap;
    vertical-align: middle;
}
.tree td input {
    display: block;
}
.tree .current {
    font-size: 12px;
    font-weight: bold;
}
.kind {
    width: 14px;
    height: 12px;
    margin: 0 7px 0 1px;
    vertical-align: -2px;
}
input[type="checkbox"] {
    appearance: none;
    flex: none;
    width: 14px;
    height: 14px;
    border: 1px solid #b8b8b8;
    background: #fff;
}
input[type="checkbox"]:checked::before {
    content: "";
    display: block;
    width: 6px;
    height: 10px;
    margin: 0 auto;
    border: solid #000;
    border-width: 0 2px 2px 0;
    transform: rotate(35deg);
}
.dots {
    display: flex;
    flex: none;
    justify-content: center;
    height: 6px;
    padding-top: 2px;
}
.dots::before {
    content: "";
    width: 16px;
    height: 1px;
}
.kind-bar {
    flex: none;
    height: 15px;
    padding-left: 5px;
    background: #c6c6c6;
    font-weight: bold;
    line-height: 15px;
}
.props {
    display: flex;
    flex: 1;
    min-height: 0;
    border: 1px solid #b4b4b4;
}
.props-body {
    flex: 1;
    min-width: 0;
    padding: 7px 11px 0 12px;
    overflow: hidden;
    font-family: "Liberation Serif", "Noto Sans CJK SC", serif;
}
.head {
    display: flex;
    align-items: center;
    height: 24px;
    font-size: 13px;
    font-weight: bold;
}
.head button {
    display: flex;
    align-items: center;
    min-width: 22px;
    font-weight: bold;
}
.head button::before {
    content: "";
    width: 8px;
    margin: 0 10px 0 4px;
    border: 6px solid transparent;
    border-width: 6px 0 6px 8px;
    border-left-color: #3a3a3a;
}
.head button.open::before {
    width: 12px;
    margin: 0 9px 0 1px;
    border-width: 8px 6px 0;
    border-color: #3a3a3a transparent transparent;
}
.head label {
    display: flex;
    align-items: center;
    gap: 9px;
    margin-left: -3px;
}
.group {
    display: flex;
    flex-direction: column;
    border: 1px solid #d6d6d6;
    border-radius: 2px;
    background: #ececec;
    padding: 12px 13px 11px 12px;
}
.main-props {
    height: 227px;
    margin: -2px 0 3px;
}
.group textarea {
    display: block;
    width: 100%;
    height: 150px;
    padding: 2px 4px;
    border: 1px solid #b4b4b4;
    background: #fff;
    resize: none;
    outline: none;
}
.check {
    display: flex;
    align-items: center;
    gap: 4px;
    height: 30px;
}
.insert {
    height: 21px;
    margin: 0 -4px 0 -2px;
    border: 3px solid #ed1c24;
    background: linear-gradient(#fff, #f2f2f2);
    line-height: 14px;
}
.look {
    height: 222px;
    margin: -2px 0 2px;
}
.split {
    display: flex;
    gap: 1px;
}
.split button {
    border: 1px solid #adadad;
    border-radius: 3px;
    background: linear-gradient(#fff, #eee);
}
.font {
    height: 25px;
    margin-bottom: 6px;
}
.font .face {
    flex: 1;
    padding-left: 6px;
    text-align: left;
}
.split .drop {
    display: flex;
    align-items: center;
    justify-content: center;
    width: 12px;
}
.drop::before {
    content: "";
    border: 3px solid transparent;
    border-top: 4px solid #555;
    border-bottom: none;
}
.row {
    display: flex;
    align-items: center;
    height: 19px;
    margin-bottom: 8px;
}
.row label {
    width: 54px;
}
.row .split {
    height: 22px;
}
.row.color {
    height: 22px;
    margin-bottom: 7px;
}
.split .swatch {
    width: 107px;
    padding: 2px 4px;
}
.swatch i {
    display: block;
    height: 16px;
    border-radius: 3px;
    background: #000;
}
.spin {
    position: relative;
    flex: 1;
    height: 19px;
}
.spin input {
    display: block;
    width: 100%;
    height: 19px;
    padding-left: 4px;
    border: 1px solid #adadad;
    border-radius: 3px;
    background: linear-gradient(90deg, #fff calc(100% - 14px), #adadad 0, #adadad calc(100% - 13px), #f5f5f5 0);
}
.spin::before, .spin::after {
    content: "";
    position: absolute;
    right: 4px;
    border: 4px solid transparent;
}
.spin::before {
    top: 4px;
    border-top: none;
    border-bottom-color: #555;
}
.spin::after {
    bottom: 4px;
    border-bottom: none;
    border-top-color: #555;
}
.caption {
    height: 18px;
    margin-top: -2px;
}
.caption ~ .caption {
    margin-top: -1px;
}
.radios {
    display: flex;
    align-items: center;
    height: 28px;
}
.radios label {
    display: flex;
    align-items: center;
    gap: 6px;
    min-width: 55px;
    margin-top: -2px;
}
.radios input {
    appearance: none;
    width: 14px;
    height: 14px;
    border: 1px solid #adadad;
    border-radius: 50%;
    background: #fff;
}
.radios input:checked {
    background: radial-gradient(#333 3px, #fff 4px);
}
.scroll {
    display: flex;
    flex-direction: column;
    width: 14px;
    border-left: 1px solid #b4b4b4;
    background: #fff;
}
.scroll button {
    display: flex;
    align-items: center;
    justify-content: center;
    height: 14px;
}
.scroll .up {
    border-bottom: 1px solid #b4b4b4;
}
.scroll button::before {
    content: "";
    border: 4px solid transparent;
}
.scroll .up::before {
    border-top: none;
    border-bottom-color: #555;
}
.scroll .down::before {
    border-bottom: none;
    border-top-color: #555;
}
.track {
    display: flex;
    flex: 1;
    align-items: flex-end;
}
.thumb {
    width: 100%;
    height: 45px;
    border: solid #b4b4b4;
    border-width: 1px 0;
    background: #e0e0e0;
}

/* status bar */
.status {
    position: relative;
    display: flex;
    flex: none;
    align-items: center;
    height: 27px;
    padding: 0 2px 0 6px;
}
.hint {
    flex: 1;
}
.coords {
    display: flex;
    gap: 7px;
    width: 358px;
    font-family: "Noto Sans CJK SC", sans-serif;
}
.zoom-combo {
    width: 113px;
    height: 22px;
    font-family: "Liberation Serif", serif;
}
.zoom {
    appearance: none;
    width: 98px;
    height: 14px;
    margin-left: 7px;
    background: linear-gradient(90deg, #2a8ade 12px, #c4c4c4 0) center / 100% 4px no-repeat;
}
.zoom::-webkit-slider-thumb {
    appearance: none;
    width: 13px;
    height: 13px;
    border: 1px solid #999;
    border-radius: 3px;
    background: #fafafa;
}
.watermark {
    position: absolute;
    right: 10px;
    top: -2px;
    color: rgba(255, 255, 255, .8);
    font: 16px/20px "Liberation Sans", sans-serif;
    text-shadow: 0 0 2px rgba(0, 0, 0, .25);
    pointer-events: none;
}
```
